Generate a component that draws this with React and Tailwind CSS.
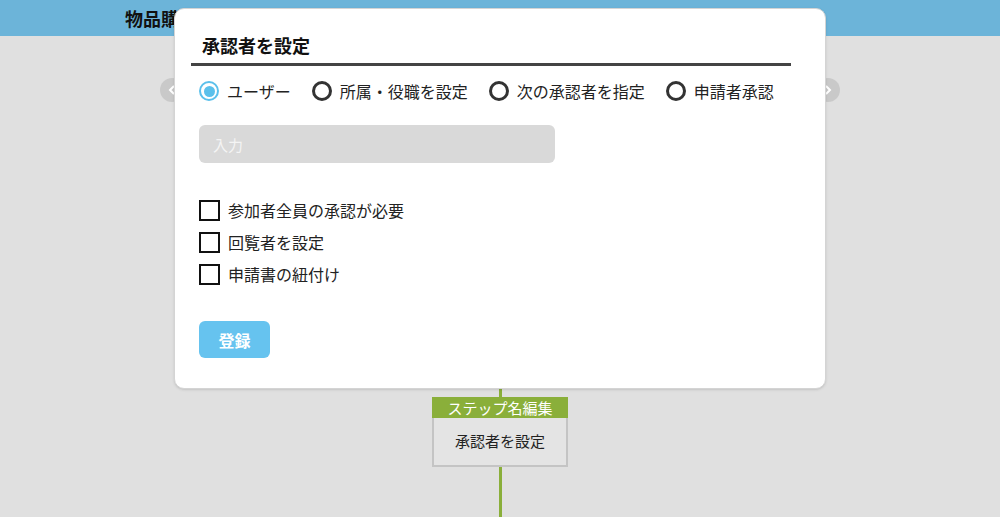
import { useState } from 'react';

const font = { fontFamily: '"Noto Sans CJK JP", "Noto Sans", sans-serif' };

function Radio({ checked, label, onClick }) {
  return (
    <button onClick={onClick} className="flex items-center gap-2 text-base text-[#222]">
      {checked ? (
        <span className="w-5 h-5 rounded-full border-[2.5px] border-[#5bc0eb] flex items-center justify-center">
          <span className="w-[11px] h-[11px] rounded-full bg-[#5bc0eb]"></span>
        </span>
      ) : (
        <span className="w-5 h-5 rounded-full border-[3px] border-[#333]"></span>
      )}
      <span>{label}</span>
    </button>
  );
}

function Check({ label }) {
  return (
    <label className="flex items-center gap-2 text-base text-[#222] h-5">
      <span className="w-[21px] h-[21px] border-2 border-[#111] bg-white"></span>
      <span>{label}</span>
    </label>
  );
}

export default function App() {
  const [mode, setMode] = useState(0);
  const modes = ['ユーザー', '所属・役職を設定', '次の承認者を指定', '申請者承認'];

  return (
    <div className="relative w-full h-[517px] bg-[#e0e0e0] overflow-hidden" style={font}>
      {/* header bar */}
      <div className="h-9 bg-[#6cb4d9] flex items-center pl-[125px]">
        <h1 className="text-lg font-bold text-[#111]">物品購入申請</h1>
      </div>

      {/* carousel arrows */}
      <div className="flex justify-between px-[160px] pt-[42px]">
        <div className="w-6 h-6 rounded-full bg-[#c9c9c9] flex items-center justify-center">
          <svg viewBox="0 0 24 24" className="w-4 h-4" fill="none" stroke="#fff" strokeWidth="3"><path d="M15 6l-6 6 6 6" /></svg>
        </div>
        <div className="w-6 h-6 rounded-full bg-[#c9c9c9] flex items-center justify-center">
          <svg viewBox="0 0 24 24" className="w-4 h-4" fill="none" stroke="#fff" strokeWidth="3"><path d="M9 6l6 6-6 6" /></svg>
        </div>
      </div>

      {/* flow diagram */}
      <div className="flex flex-col items-center">
        <div className="w-[3px] h-[295px] bg-[#8aaf3a]"></div>
        <div className="w-[136px] flex flex-col">
          <div className="h-[21px] bg-[#8aaf3a] text-white text-[15px] leading-[21px] text-center">ステップ名編集</div>
          <div className="h-[49px] bg-[#e4e4e4] border-2 border-t-0 border-[#c4c4c4] flex items-center justify-center text-[15px] text-[#222]">承認者を設定</div>
        </div>
        <div className="w-[3px] h-[60px] bg-[#8aaf3a]"></div>
      </div>

      {/* modal */}
      <div className="absolute left-[174px] top-[8px] w-[652px] h-[381px] rounded-[10px] bg-white border border-[#d4d4d4] shadow-sm">
        <div className="pl-4 pt-[24px]">
          <div className="w-[600px] border-b-[3px] border-[#444] pb-[6px]">
            <h2 className="pl-[11px] text-lg leading-6 font-bold text-[#111]">承認者を設定</h2>
          </div>
        </div>
        <div className="pl-[24px] pt-[13px] flex items-center gap-[21px]">
          {modes.map((m, i) => (
            <Radio key={m} label={m} checked={mode === i} onClick={() => setMode(i)} />
          ))}
        </div>
        <div className="pl-[24px] pt-[22px]">
          <input
            placeholder="入力"
            className="w-[356px] h-[38px] rounded-md bg-[#d9d9d9] px-[14px] text-[15px] placeholder:text-[#f4f4f4] outline-none"
          />
        </div>
        <div className="pl-[24px] pt-[37px] flex flex-col gap-3">
          <Check label="参加者全員の承認が必要" />
          <Check label="回覧者を設定" />
          <Check label="申請書の紐付け" />
        </div>
        <div className="pl-[24px] pt-[37px]">
          <button className="w-[71px] h-[37px] rounded-md bg-[#66c3ef] text-white font-bold text-base">登録</button>
        </div>
      </div>
    </div>
  );
}
